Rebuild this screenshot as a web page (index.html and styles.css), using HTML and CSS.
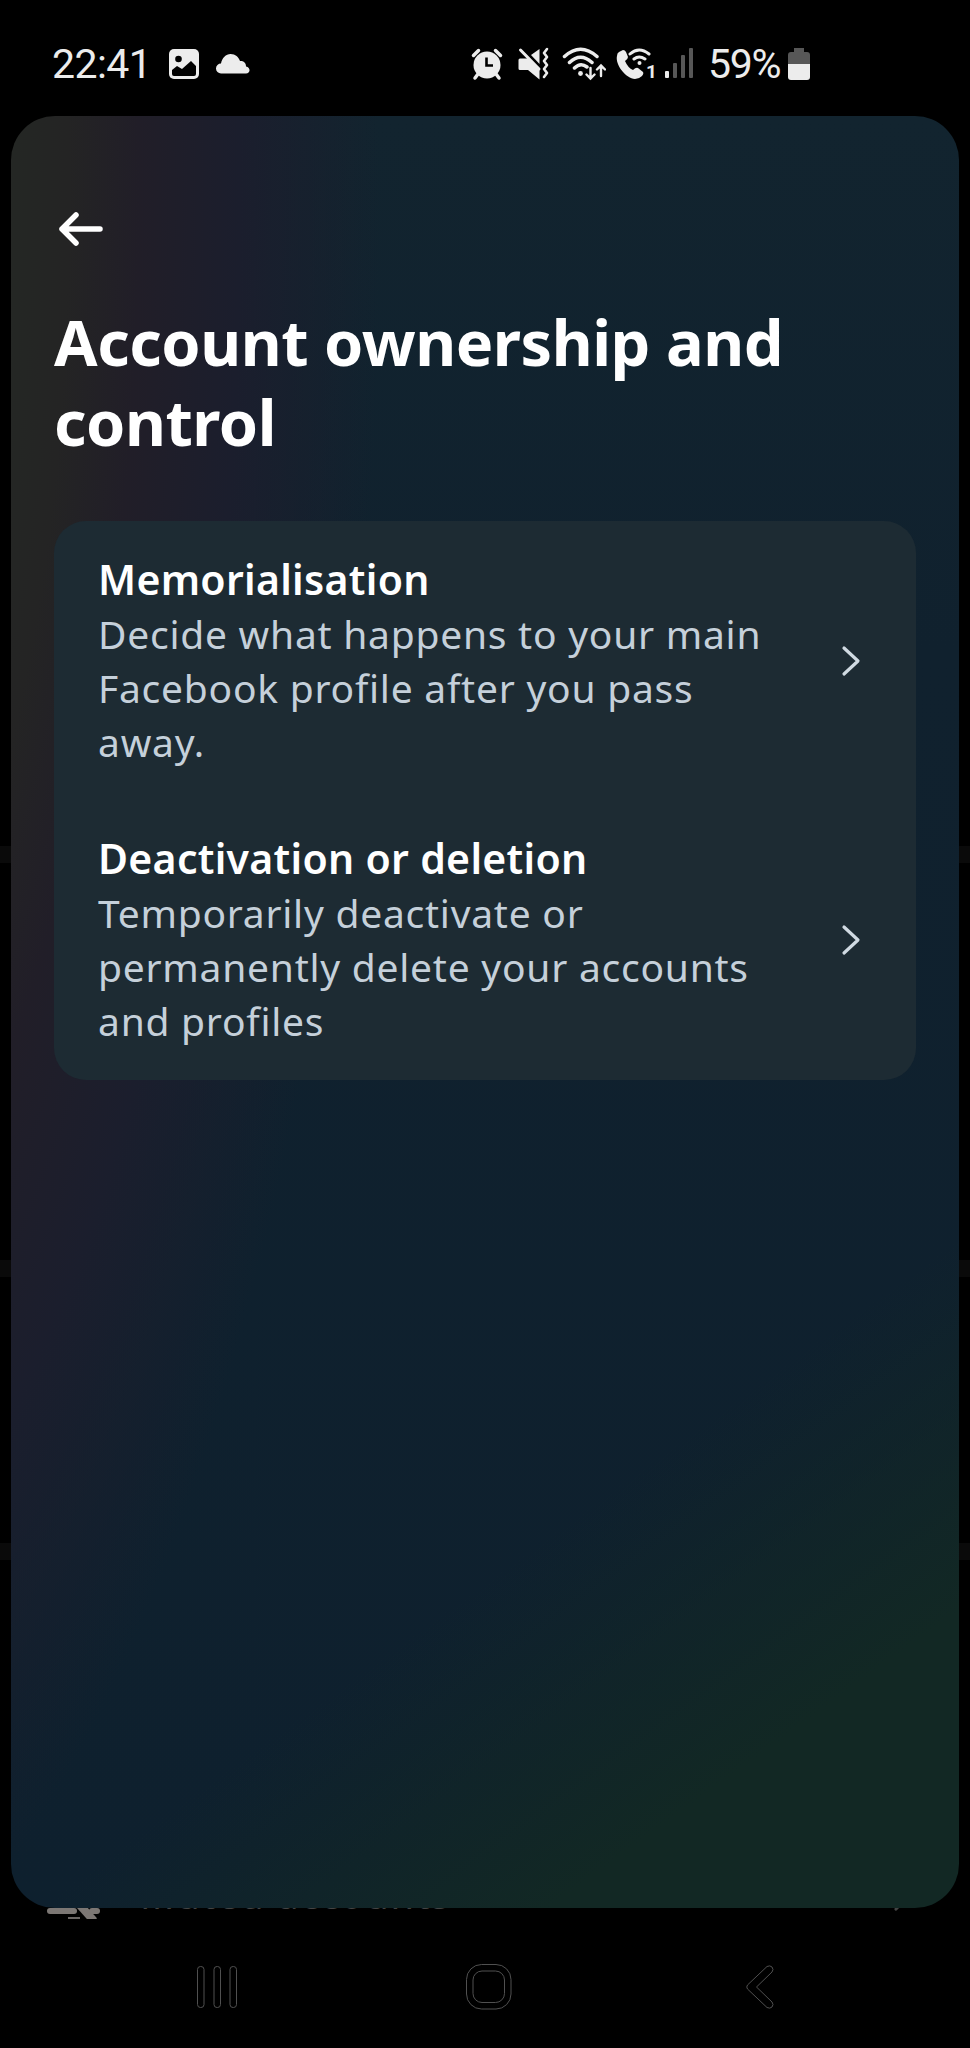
FILE: index.html
```html
<!DOCTYPE html>
<html lang="en">
<head>
    <meta charset="UTF-8">
    <meta name="viewport" content="width=device-width, initial-scale=1.0">
    <title>Account ownership and control</title>
    <link rel="stylesheet" href="styles.css">
</head>
<body>
    <div class="screen">
        <!-- settings list dimmed behind the sheet -->
        <div class="backdrop">
            <div class="divider divider-1"></div>
            <div class="divider divider-2"></div>
            <div class="divider divider-3"></div>
            <div class="muted-row">
                <svg class="muted-icon" width="56" height="24" viewBox="0 0 56 24">
                    <path d="M4 16h24" stroke="#7c7774" stroke-width="6" stroke-linecap="round"/>
                    <path d="M22 23h12" stroke="#6a6664" stroke-width="2"/>
                    <path d="M32 8L48 26" stroke="#7c7774" stroke-width="8"/>
                    <path d="M46 16h5" stroke="#7c7774" stroke-width="6" stroke-linecap="round"/>
                </svg>
                <span class="muted-label">Muted accounts</span>
                <svg class="muted-chevron" width="20" height="34" viewBox="0 0 20 34">
                    <path d="M4 4l12 13L4 30" fill="none" stroke="#444" stroke-width="3.200" stroke-linecap="round"/>
                </svg>
            </div>
        </div>

        <header class="status-bar">
            <span class="clock">22:41</span>
            <svg class="icon-picture" width="32" height="32" viewBox="0 0 32 32">
                <rect x="1" y="1" width="30" height="30" rx="5" fill="#ececec"/>
                <circle cx="10.500" cy="11" r="3.300" fill="#000"/>
                <path d="M4 22l5-4 5 3 9-8 5 5v8q0 2-2 2H6q-2 0-2-2z" fill="#000"/>
            </svg>
            <svg class="icon-cloud" width="36" height="22" viewBox="0 0 36 22">
                <path d="M6 20.500a5 5 0 0 1 0-10C7 5 11 1 15.500 1c5 0 8 3 9.500 7 4 0 6 2 6 5.500 5 1 4.500 7 0 7z" fill="#ececec"/>
            </svg>
            <div class="status-icons">
                <svg width="32" height="34" viewBox="0 0 32 34">
                    <path d="M2.500 8.500l5-5M29.500 8.500l-5-5" stroke="#ececec" stroke-width="3.500" stroke-linecap="round"/>
                    <path d="M7 27l-3 4M25 27l3 4" stroke="#ececec" stroke-width="3.500" stroke-linecap="round"/>
                    <circle cx="16" cy="18" r="13.500" fill="#ececec"/>
                    <path d="M15.500 10.500v8h6.500" fill="none" stroke="#000" stroke-width="2.600"/>
                </svg>
                <svg class="icon-mute" width="32" height="34" viewBox="0 0 32 34">
                    <path d="M13 8l8.500-6v15z" fill="#ececec"/>
                    <path d="M2.500 3L21 22" stroke="#ececec" stroke-width="3" stroke-linecap="round"/>
                    <path d="M2 11.500h8L21.500 23v9.500L10 23H2q-1.500 0-1.500-1.500v-8.500q0-1.500 1.500-1.500z" fill="#ececec"/>
                    <path d="M29 2l-3 4 3 4-3 4 3 4-3 4 3 4-3 4" fill="none" stroke="#ececec" stroke-width="2.600" stroke-linejoin="round" stroke-linecap="round"/>
                </svg>
                <svg class="icon-wifi" width="44" height="34" viewBox="0 0 44 34">
                    <g fill="none" stroke="#ececec" stroke-width="3.500" stroke-linecap="round">
                        <path d="M2.500 9.500Q18.500-5 35 9.500M7.500 15.500Q18.500 5 30 15.500M12.500 21Q18.500 15 25 20"/>
                        <path d="M28.500 21v10M24.500 27.500l4 4 4-4M39 29V19M35 22.500l4-4 4 4" stroke-width="2.400"/>
                    </g>
                    <circle cx="18.500" cy="26.500" r="2.400" fill="#ececec"/>
                </svg>
                <svg class="icon-call" width="44" height="38" viewBox="0 0 44 38">
                    <path d="M3 5l4-2q2 0 3 2l2 5q0 2-3 4 3 7 8 9 3-3 5-2l5 4q1 2-1 4-3 3-7 3C9 31-1 17 1 9q0-3 2-4z" fill="#ececec"/>
                    <g fill="none" stroke="#ececec" stroke-width="3" stroke-linecap="round">
                        <path d="M14 7q9-8 19 0M18 12q5-4 11 0"/>
                    </g>
                    <circle cx="23.500" cy="16" r="2" fill="#ececec"/>
                    <text class="sim-number" x="30" y="31">1</text>
                </svg>
                <svg class="icon-signal" width="30" height="34" viewBox="0 0 30 34">
                    <rect x="1" y="24" width="4" height="7" rx="1" fill="#ececec"/>
                    <rect x="9" y="16" width="4" height="15" rx="1" fill="#575757"/>
                    <rect x="17" y="8" width="4" height="23" rx="1" fill="#575757"/>
                    <rect x="25" y="1" width="4" height="30" rx="1" fill="#575757"/>
                </svg>
            </div>
            <span class="battery-level">59%</span>
            <svg class="icon-battery" width="22" height="34" viewBox="0 0 22 34">
                <path d="M6 1h10v4h3q3 0 3 3v9H0V8q0-3 3-3h3z" fill="#575757"/>
                <path d="M0 17h22v13q0 3-3 3H3q-3 0-3-3z" fill="#ececec"/>
            </svg>
        </header>

        <main class="sheet">
            <svg class="back-arrow" width="46" height="36" viewBox="0 0 46 36">
                <path d="M4 18h38M18 4L4 18l14 14" fill="none" stroke="#fff" stroke-width="5.500" stroke-linecap="round" stroke-linejoin="round"/>
            </svg>
            <h1>Account ownership and<br>control</h1>

            <div class="card">
                <div class="item">
                    <div class="item-text">
                        <h2>Memorialisation</h2>
                        <p>Decide what happens to your main<br>Facebook profile after you pass<br>away.</p>
                    </div>
                    <svg class="chevron" width="24" height="34" viewBox="0 0 24 34">
                        <path d="M4 4l14 13L4 30" fill="none" stroke="#d0dae2" stroke-width="3.200" stroke-linecap="round" stroke-linejoin="round"/>
                    </svg>
                </div>
                <div class="item">
                    <div class="item-text">
                        <h2>Deactivation or deletion</h2>
                        <p>Temporarily deactivate or<br>permanently delete your accounts<br>and profiles</p>
                    </div>
                    <svg class="chevron" width="24" height="34" viewBox="0 0 24 34">
                        <path d="M4 4l14 13L4 30" fill="none" stroke="#d0dae2" stroke-width="3.200" stroke-linecap="round" stroke-linejoin="round"/>
                    </svg>
                </div>
            </div>
        </main>

        <nav class="nav-bar">
            <svg width="42" height="46" viewBox="0 0 42 46" fill="none" stroke="#505050">
                <rect x="1.500" y="2.500" width="6.500" height="41" rx="3"/>
                <rect x="18" y="2.500" width="6.500" height="41" rx="3"/>
                <rect x="34" y="2.500" width="6.500" height="41" rx="3"/>
            </svg>
            <svg width="46" height="46" viewBox="0 0 46 46" fill="none" stroke="#505050">
                <rect x=".5" y=".5" width="44.500" height="44.500" rx="15"/>
                <rect x="7" y="7" width="31.500" height="31.500" rx="9"/>
            </svg>
            <svg width="30" height="46" viewBox="0 0 30 46" fill="none" stroke="#505050">
                <path d="M1.500 21L21 2.500q3-1.500 5 .5 2 2.500 0 5L10.500 23 26 38q2 2.500 0 5-2 2-5 .5L1.500 25q-1.500-2 0-4z"/>
            </svg>
        </nav>
    </div>
</body>
</html>
```
FILE: styles.css
```css
* {
    box-sizing: border-box;
}
body {
    margin: 0;
    background-color: #000;
    font-family: 'Noto Sans', 'Open Sans', sans-serif;
}
svg {
    display: block;
    flex-shrink: 0;
}
.screen {
    position: relative;
    width: 970px;
    height: 2048px;
    overflow: hidden;
    display: flex;
    flex-direction: column;
}

/* dimmed page behind the sheet */
.backdrop {
    position: absolute;
    inset: 0;
}
.divider {
    position: absolute;
    width: 100%;
    height: 17px;
    background-color: #0a0a0a;
}
.divider-1 {
    top: 846px;
}
.divider-2 {
    top: 1260px;
}
.divider-3 {
    top: 1543px;
}
.muted-row {
    position: absolute;
    left: 46px;
    right: 58px;
    top: 1868px;
    display: flex;
}
.muted-icon {
    margin-top: 27px;
}
.muted-label {
    margin-left: 38px;
    font-size: 38px;
    line-height: 52px;
    letter-spacing: 1.8px;
    white-space: nowrap;
    color: #444;
}
.muted-chevron {
    margin: 11px 0 0 auto;
}

.status-bar {
    position: relative;
    height: 116px;
    padding: 12px 0 0 52px;
    display: flex;
    align-items: center;
    color: #ececec;
    font-family: Roboto, sans-serif;
    font-size: 41px;
}
.clock {
    width: 97px;
    letter-spacing: -0.6px;
}
.icon-picture {
    margin-left: 19px;
}
.icon-cloud {
    margin-left: 15px;
}
.status-icons {
    display: flex;
    height: 34px;
    margin-left: 220px;
}
.icon-mute {
    margin-left: 15px;
}
.icon-wifi {
    margin-left: 12px;
}
.icon-call {
    margin-left: 10px;
}
.icon-signal {
    margin-left: 4px;
}
.sim-number {
    font: bold 19px Roboto, sans-serif;
    fill: #ececec;
}
.battery-level {
    width: 74px;
    margin-left: 14px;
    letter-spacing: -1.3px;
}
.icon-battery {
    margin-left: 6px;
}

.sheet {
    position: relative;
    height: 1792px;
    margin: 0 11px;
    padding: 95px 43px 0;
    border-radius: 44px;
    background:
        radial-gradient(669px 1860px at -300px 84px, #242724 44.8%, #242424 53.5%, #211e28 64%, #1b1e2d 79%, rgba(16, 33, 46, 0) 100%),
        linear-gradient(144deg, rgba(18, 40, 36, 0) 73%, #122824 88%),
        linear-gradient(#12242f, #10212e 30%, #0e202e);
}
.back-arrow {
    margin-left: 4px;
}
h1 {
    margin: 55px 0 0;
    font-size: 63px;
    font-weight: 700;
    line-height: 80px;
    letter-spacing: -0.45px;
    white-space: nowrap;
    color: #fff;
}
.card {
    margin-top: 59px;
    height: 559px;
    padding: 30px 44px;
    border-radius: 32px;
    background-color: #1d2b33;
}
.item {
    display: flex;
    height: 279px;
}
.item-text {
    width: 742px;
    white-space: nowrap;
}
.item h2 {
    margin: 0;
    font-size: 41px;
    font-weight: 600;
    line-height: 56px;
    letter-spacing: 0.3px;
    color: #fff;
}
.item p {
    margin: 0;
    font-size: 39px;
    line-height: 54px;
    letter-spacing: 0.75px;
    color: #c5d0da;
}
.chevron {
    margin: 93px 0 0 0;
}

.nav-bar {
    position: relative;
    display: flex;
    justify-content: space-between;
    padding: 56px 194px 0 196px;
}
.nav-bar svg:nth-child(2) {
    margin-right: 6px;
}
```
